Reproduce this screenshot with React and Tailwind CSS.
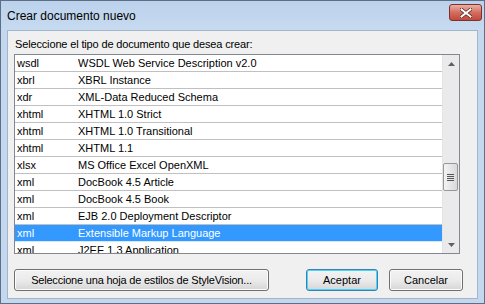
import React from "react";

const rows = [
  ["wsdl", "WSDL Web Service Description v2.0"],
  ["xbrl", "XBRL Instance"],
  ["xdr", "XML-Data Reduced Schema"],
  ["xhtml", "XHTML 1.0 Strict"],
  ["xhtml", "XHTML 1.0 Transitional"],
  ["xhtml", "XHTML 1.1"],
  ["xlsx", "MS Office Excel OpenXML"],
  ["xml", "DocBook 4.5 Article"],
  ["xml", "DocBook 4.5 Book"],
  ["xml", "EJB 2.0 Deployment Descriptor"],
  ["xml", "Extensible Markup Language", true],
  ["xml", "J2EE 1.3 Application"],
];

const sys = { fontFamily: '"Liberation Sans", Arial, sans-serif' };

function Button({ children, className = "", isDefault = false }) {
  return (
    <button
      className={`h-[22px] rounded-[3px] border text-[11px] text-black bg-gradient-to-b from-[#f2f2f2] via-[#ebebeb] to-[#d6d6d6] ${
        isDefault ? "border-[#3c7fb1] shadow-[inset_0_0_0_1px_#48d7fb]" : "border-[#707070] shadow-[inset_0_0_0_1px_#fcfcfc]"
      } ${className}`}
      style={sys}
    >
      {children}
    </button>
  );
}

export default function App() {
  return (
    <div className="w-[485px] h-[304px] bg-[#c3d7ee] border border-[#5d6f86] flex flex-col overflow-hidden">
      {/* title bar */}
      <div className="h-[29px] flex items-center justify-between pl-[6px] pr-[2px] bg-gradient-to-b from-[#bcd2ec] to-[#c6daf0]">
        <span className="text-[12px] text-black leading-none" style={sys}>
          Crear documento nuevo
        </span>
        <div className="w-[33px] h-[17px] -mt-[6px] rounded-[3px] border border-[#7f2f2c] bg-gradient-to-b from-[#eab0a6] via-[#d46d5e] to-[#c04a3b] flex items-center justify-center">
          <svg width="12" height="10" viewBox="0 0 12 10">
            <path d="M1.5 1.5 L10.5 8.5 M10.5 1.5 L1.5 8.5" stroke="#4a1a16" strokeWidth="3.4" strokeLinecap="square" />
            <path d="M1.5 1.5 L10.5 8.5 M10.5 1.5 L1.5 8.5" stroke="#ffffff" strokeWidth="2" strokeLinecap="square" />
          </svg>
        </div>
      </div>

      {/* client area */}
      <div className="flex-1 mx-[6px] mb-[4px] border border-[#a3b5cb] bg-[#f0f0f0] flex flex-col pl-[6px] pr-[14px]">
        <div className="h-[23px] flex items-end pl-[1px] text-[11px] tracking-[-0.15px] text-black leading-none pb-[4px]" style={sys}>
          Seleccione el tipo de documento que desea crear:
        </div>
        <div className="h-[200px] mr-[3px] border border-[#828790] bg-white flex">
          <div className="flex-1 overflow-hidden">
            {rows.map(([ext, name, sel], i) => (
              <div
                key={i}
                className={`h-[17px] flex items-center text-[11px] border-b ${
                  sel ? "bg-[#3399ff] text-white border-[#d6e8fb]" : "text-black border-[#c0c0c0]"
                }`}
                style={sys}
              >
                <span className="w-[63px] pl-[2px] shrink-0">{ext}</span>
                <span className="whitespace-nowrap">{name}</span>
              </div>
            ))}
          </div>
          {/* scrollbar */}
          <div className="w-[17px] bg-[#eaeaea] border-l border-[#e4e4e4] flex flex-col items-center">
            <div className="h-[17px] flex items-center justify-center">
              <svg width="7" height="4" viewBox="0 0 7 4">
                <path d="M0 4 L3.5 0 L7 4 Z" fill="#606060" />
              </svg>
            </div>
            <div className="flex-1 w-full relative">
              <div className="absolute left-[0px] top-[91px] w-[15px] h-[28px] rounded-[2px] border border-[#979797] bg-gradient-to-r from-[#f3f3f3] to-[#d9d9d9] flex flex-col items-center justify-center gap-[1px]">
                <div className="w-[7px] h-[1px] bg-[#555]" />
                <div className="w-[7px] h-[1px] bg-[#555]" />
                <div className="w-[7px] h-[1px] bg-[#555]" />
                <div className="w-[7px] h-[1px] bg-[#555]" />
              </div>
            </div>
            <div className="h-[17px] flex items-center justify-center">
              <svg width="7" height="4" viewBox="0 0 7 4">
                <path d="M0 0 L3.5 4 L7 0 Z" fill="#606060" />
              </svg>
            </div>
          </div>
        </div>
        <div className="flex items-center mt-[15px]">
          <Button className="w-[255px] tracking-[-0.2px]">Seleccione una hoja de estilos de StyleVision...</Button>
          <div className="flex-1" />
          <Button className="w-[72px]" isDefault>
            Aceptar
          </Button>
          <Button className="w-[74px] ml-[11px]">Cancelar</Button>
        </div>
      </div>
    </div>
  );
}
